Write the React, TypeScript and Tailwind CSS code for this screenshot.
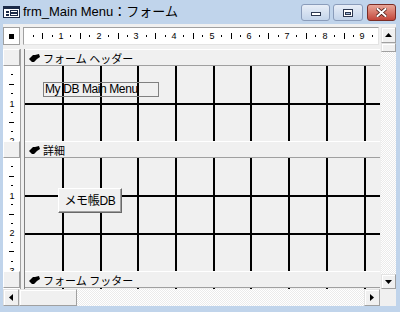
import React from "react";

const CM = 37.69;

const sections = [
  { label: "フォーム ヘッダー", h: 75 },
  { label: "詳細", h: 113 },
  { label: "フォーム フッター", h: 20 },
];

function FormIcon() {
  return (
    <svg width="17" height="12" viewBox="0 0 17 12" shapeRendering="crispEdges">
      <rect x="0.5" y="0.5" width="16" height="11" fill="#fff" stroke="#1c2b48" />
      <rect x="1" y="1" width="15" height="2" fill="#1c2b48" />
      <rect x="3" y="5" width="3" height="2" fill="#1c2b48" />
      <rect x="7.5" y="4.5" width="7" height="2" fill="#fff" stroke="#1c2b48" />
      <rect x="3" y="8" width="3" height="2" fill="#1c2b48" />
      <rect x="7.5" y="7.5" width="7" height="2" fill="#fff" stroke="#1c2b48" />
    </svg>
  );
}

function Pointer() {
  return (
    <svg width="11" height="8" viewBox="0 0 11 8" className="shrink-0">
      <path d="M0 5 L4 1 L6 1 L10 0 L11 3 L8 5 L5 8 L3 8 Z" fill="#000" />
    </svg>
  );
}

function Arrow({ dir }: { dir: "up" | "down" | "left" | "right" }) {
  const d = {
    up: "M0 4 L3.5 0 L7 4 Z",
    down: "M0 0 L7 0 L3.5 4 Z",
    left: "M4 0 L4 7 L0 3.5 Z",
    right: "M0 0 L4 3.5 L0 7 Z",
  }[dir];
  const vertical = dir === "up" || dir === "down";
  return (
    <svg width={vertical ? 7 : 4} height={vertical ? 4 : 7}>
      <path d={d} fill="#000" />
    </svg>
  );
}

function ScrollButton({ className, children }: { className: string; children?: React.ReactNode }) {
  return (
    <div
      className={`${className} shrink-0 flex items-center justify-center bg-[#f0f0f0] border border-t-[#e3e3e3] border-l-[#e3e3e3] border-r-[#a0a0a0] border-b-[#a0a0a0] shadow-[inset_1px_1px_#ffffff]`}
    >
      {children}
    </div>
  );
}

function TopRuler() {
  const marks = [];
  for (let k = 1; k < 38; k++) {
    const x = Math.round(-0.7 + 9.42 * k);
    if (k % 4 === 0) {
      marks.push(
        <text key={k} x={x} y={11} textAnchor="middle" fontSize="9" fontFamily="Liberation Sans, sans-serif" fill="#000">
          {k / 4}
        </text>
      );
    } else if (k % 2 === 0) {
      marks.push(<rect key={k} x={x} y={5} width={1} height={6} fill="#000" />);
    } else {
      marks.push(<rect key={k} x={x} y={7} width={1} height={2} fill="#000" />);
    }
  }
  return (
    <svg width="354" height="16" className="block" shapeRendering="crispEdges">
      {marks}
    </svg>
  );
}

function SideRuler({ h }: { h: number }) {
  const marks = [];
  for (let k = 1; k * 9.42 - 6 < h; k++) {
    const y = Math.round(-1 + 9.42 * k);
    if (k % 4 === 0) {
      marks.push(
        <text key={k} x={9} y={y + 3.5} textAnchor="middle" fontSize="9" fontFamily="Liberation Sans, sans-serif" fill="#000">
          {k / 4}
        </text>
      );
    } else if (k % 2 === 0) {
      marks.push(<rect key={k} x={6} y={y} width={5} height={1} fill="#000" />);
    } else {
      marks.push(<rect key={k} x={8} y={y} width={2} height={1} fill="#000" />);
    }
  }
  return (
    <svg width="17" height={h} className="block shrink-0" shapeRendering="crispEdges">
      {marks}
    </svg>
  );
}

function Grid({ h }: { h: number }) {
  const xs = Array.from({ length: 9 }, (_, i) => Math.round(37 + CM * i));
  const ys: number[] = [];
  for (let y = 37; y < h - 1; y += CM) ys.push(Math.round(y));
  return (
    <svg width="355" height={h} className="block" shapeRendering="crispEdges">
      {xs.map((x) => (
        <rect key={"x" + x} x={x} y={0} width={2} height={h} fill="#000" />
      ))}
      {ys.map((y) => (
        <rect key={"y" + y} x={0} y={y} width={355} height={2} fill="#000" />
      ))}
    </svg>
  );
}

function SectionBar({ label }: { label: string }) {
  return (
    <div className="h-[17px] shrink-0 flex items-center gap-[3px] pl-[4px] bg-[#f0f0f0] border-t border-t-white border-b border-b-[#a0a0a0] text-[11px] leading-[14px] text-black font-['Noto_Sans_CJK_JP',sans-serif]">
      <Pointer />
      <span className="whitespace-nowrap">{label}</span>
    </div>
  );
}

const track =
  "bg-[repeating-conic-gradient(#ffffff_0%_25%,#ebebeb_0%_50%)] bg-[length:2px_2px]";

export default function App() {
  return (
    <div className="w-[400px] h-[312px] flex flex-col overflow-hidden bg-[#c0d4eb] font-['Liberation_Sans','Noto_Sans_CJK_JP',sans-serif]">
      {/* title bar */}
      <div className="h-[24px] flex items-start shrink-0">
        <div className="ml-[3px] mt-[6px]">
          <FormIcon />
        </div>
        <div className="ml-[3px] mt-[3px] text-[13px] leading-[18px] text-black">frm_Main Menu：フォーム</div>
        <div className="ml-auto mr-[4px] mt-[4px] flex gap-[3px]">
          <div className="w-[29px] h-[17px] rounded-[3px] border border-[#8a9cba] bg-linear-to-b from-[#e8eef7] to-[#c3d4ea] flex items-center justify-center">
            <div className="mt-[3px] w-[10px] h-[4px] bg-white border border-[#2c3850]" />
          </div>
          <div className="w-[30px] h-[17px] rounded-[3px] border border-[#8a9cba] bg-linear-to-b from-[#e8eef7] to-[#c3d4ea] flex items-center justify-center">
            <div className="w-[10px] h-[8px] border border-[#2c3850] bg-white p-[1px] pt-[2px]">
              <div className="w-full h-full border border-[#2c3850] bg-[#9fb5d6]" />
            </div>
          </div>
          <div className="ml-[1px] w-[29px] h-[17px] rounded-[3px] border border-[#7a2c24] bg-linear-to-b from-[#e8a698] to-[#c2453a] flex items-center justify-center">
            <svg width="11" height="9" viewBox="0 0 11 9">
              <path d="M1.5 1 L9.5 8 M9.5 1 L1.5 8" stroke="#4a1a14" strokeWidth="3.6" strokeLinecap="square" />
              <path d="M1.5 1 L9.5 8 M9.5 1 L1.5 8" stroke="#ffffff" strokeWidth="2" strokeLinecap="square" />
            </svg>
          </div>
        </div>
      </div>

      {/* client area */}
      <div className="ml-[3px] mr-[4px] h-[282px] shrink-0 bg-[#f0f0f0] flex flex-col pt-[3px]">
        <div className="h-[262px] shrink-0 flex">
          <div className="w-[377px] flex flex-col">
            {/* horizontal ruler */}
            <div className="h-[18px] shrink-0 flex">
              <div className="w-[17px] h-[18px] bg-white border border-[#a0a0a0] flex items-center justify-center">
                <div className="w-[5px] h-[5px] bg-black" />
              </div>
              <div className="ml-[3px] w-[356px] h-[18px] bg-white border border-t-[#a0a0a0] border-l-[#a0a0a0] border-r-[#e3e3e3] border-b-[#e3e3e3]">
                <TopRuler />
              </div>
            </div>
            <div className="h-[4px] shrink-0" />
            {/* body */}
            <div className="h-[240px] shrink-0 flex overflow-hidden">
              <div className="w-[18px] bg-white border-r border-r-[#a0a0a0] flex flex-col">
                {sections.map((s) => (
                  <React.Fragment key={s.label}>
                    <div className="h-[17px] shrink-0 bg-[#f0f0f0] border border-t-white border-l-white border-r-[#a0a0a0] border-b-[#a0a0a0]" />
                    <SideRuler h={s.h} />
                  </React.Fragment>
                ))}
              </div>
              <div className="w-[3px]" />
              <div className="w-[356px] border-l border-l-[#808080] flex flex-col">
                {sections.map((s, i) => (
                  <React.Fragment key={s.label}>
                    <SectionBar label={s.label} />
                    <div className="relative shrink-0" style={{ height: s.h }}>
                      <Grid h={s.h} />
                      {i === 0 && (
                        <div className="absolute left-[18px] top-[16px] w-[116px] h-[15px] border border-[#808080] pl-[1px] text-[12px] leading-[13px] tracking-[-0.4px] text-black font-['Liberation_Sans',sans-serif]">
                          My DB Main Menu
                        </div>
                      )}
                      {i === 1 && (
                        <div className="absolute left-[33px] top-[30px] w-[64px] h-[25px] bg-[#f0f0f0] border border-t-white border-l-white border-r-[#696969] border-b-[#696969] shadow-[inset_-1px_-1px_#a0a0a0] flex items-center justify-center text-[12px] tracking-[-0.3px] text-black font-['Liberation_Sans','Noto_Sans_CJK_JP',sans-serif]">
                          メモ帳DB
                        </div>
                      )}
                    </div>
                  </React.Fragment>
                ))}
              </div>
            </div>
          </div>
          <div className="w-[1px]" />
          {/* vertical scrollbar */}
          <div className="w-[15px] flex flex-col">
            <ScrollButton className="h-[16px]">
              <Arrow dir="up" />
            </ScrollButton>
            <ScrollButton className="h-[9px]" />
            <div className={`flex-1 ${track}`} />
            <ScrollButton className="h-[15px]">
              <Arrow dir="down" />
            </ScrollButton>
          </div>
        </div>
        {/* horizontal scrollbar */}
        <div className="h-[17px] shrink-0 flex">
          <ScrollButton className="w-[16px]">
            <Arrow dir="left" />
          </ScrollButton>
          <ScrollButton className="w-[58px]" />
          <div className={`flex-1 ${track}`} />
          <ScrollButton className="w-[16px]">
            <Arrow dir="right" />
          </ScrollButton>
          <div className="w-[16px] bg-[#f0f0f0]" />
        </div>
      </div>
      <div className="h-[6px] shrink-0" />
    </div>
  );
}
